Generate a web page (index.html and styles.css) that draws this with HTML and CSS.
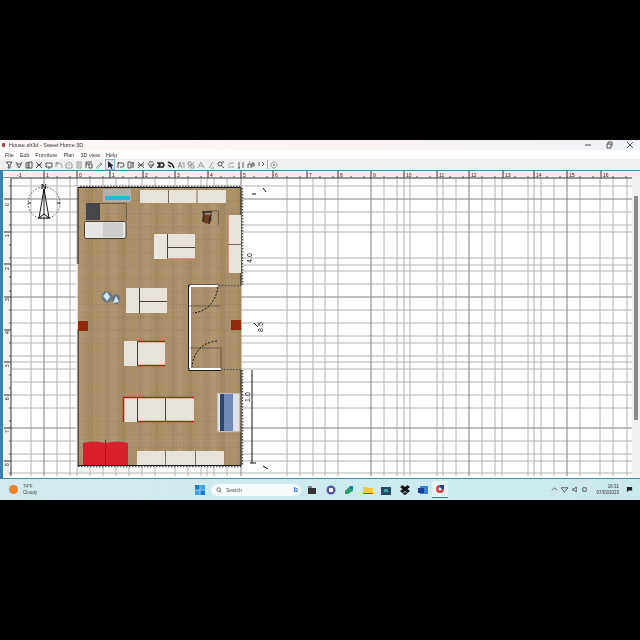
FILE: index.html
```html
<!DOCTYPE html>
<html lang="en">
<head>
<meta charset="utf-8">
<title>Sweet Home 3D</title>
<link rel="stylesheet" href="styles.css">
</head>
<body>
<main class="screen">
  <header class="titlebar">
    <span class="app-dot"></span>
    <span class="title-text">House.sh3d - Sweet Home 3D</span>
    <div class="win-controls">
      <svg class="win-btn" viewBox="0 0 8 8"><path class="ic" d="M1 4H7"/></svg>
      <svg class="win-btn" viewBox="0 0 8 8"><path class="ic" d="M2 3H6V7M2 3V7H6M3 3V1H7V5"/></svg>
      <svg class="win-btn" viewBox="0 0 8 8"><path class="ic" d="M1 1L7 7M7 1L1 7"/></svg>
    </div>
  </header>
  <nav class="menubar">
    <span>File</span><span>Edit</span><span>Furniture</span><span>Plan</span><span>3D view</span><span>Help</span>
  </nav>
  <div class="toolbar">
    <svg class="tool" viewBox="0 0 8 8"><path class="ic" d="M1 1H7L5 4V7H3L4 4Z"/></svg>
    <svg class="tool" viewBox="0 0 8 8"><path class="ic" d="M1 1L4 7L7 1M2 3H6"/></svg>
    <svg class="tool" viewBox="0 0 8 8"><path class="ic" d="M1 7V2L3 1V7M4 7V1H7V7H1"/></svg>
    <svg class="tool" viewBox="0 0 8 8"><path class="ic" d="M1 1L7 7M7 1L1 7M2 4H6"/></svg>
    <svg class="tool" viewBox="0 0 8 8"><path class="ic" d="M1 2H7V6H1ZM3 7H5"/></svg>
    <svg class="tool faint" viewBox="0 0 8 8"><path class="ic" d="M1 6V2H5L7 4V7M3 1L1 2L3 4"/></svg>
    <svg class="tool faint" viewBox="0 0 8 8"><path class="ic" d="M1 7H7V3L4 1L1 3ZM3 4H5"/></svg>
    <svg class="tool faint" viewBox="0 0 8 8"><path class="ic" d="M2 1H6V7H2ZM3 3H5M3 5H5"/></svg>
    <svg class="tool" viewBox="0 0 8 8"><path class="ic" d="M1 1H7M1 1V7M1 3H7M4 3V7H7V3"/></svg>
    <svg class="tool faint" viewBox="0 0 8 8"><path class="ic" d="M1 7L6 2L7 3L2 8M5 1L7 3"/></svg>
    <span class="tool-selected">
      <svg class="tool" viewBox="0 0 8 8"><path class="solid" d="M2 0V7L4 5.500L5.500 8L6.500 7.500L5.500 5H7.500Z"/></svg>
    </span>
    <svg class="tool" viewBox="0 0 8 8"><path class="ic" d="M1 7V2H5A2 2 0 0 1 5 6H3M2 1L1 2L2 3"/></svg>
    <svg class="tool" viewBox="0 0 8 8"><path class="ic" d="M1 1H4V7H1ZM5 2H7M6 1V7"/></svg>
    <svg class="tool" viewBox="0 0 8 8"><path class="ic" d="M1 1L7 7M1 7L7 1M1 4H3M5 4H7"/></svg>
    <svg class="tool" viewBox="0 0 8 8"><path class="ic" d="M1 2L4 7L7 2M2 1L6 1M3 4H7"/></svg>
    <svg class="tool" viewBox="0 0 8 8"><path class="ic thick" d="M1 2H6L7 4L6 6H1L3 4Z"/></svg>
    <svg class="tool" viewBox="0 0 8 8"><path class="ic thick" d="M1 1L5 3L7 7M1 4L4 6"/></svg>
    <svg class="tool faint" viewBox="0 0 8 8"><path class="ic" d="M1 7L3 1L5 7M2 5H4M5 2H7V7"/></svg>
    <svg class="tool faint" viewBox="0 0 8 8"><path class="ic" d="M1 1H4V4H1ZM4 4H7V7H4ZM7 1L1 7"/></svg>
    <svg class="tool faint" viewBox="0 0 8 8"><path class="ic" d="M1 7L4 1L7 7M2.500 5H5.500"/></svg>
    <svg class="tool faint" viewBox="0 0 8 8"><path class="ic" d="M2 7L6 1M4 7H7"/></svg>
    <svg class="tool" viewBox="0 0 8 8"><circle class="ic" cx="3" cy="3" r="2"/><path class="ic" d="M4.500 4.500L7 7M5 1H7"/></svg>
    <svg class="tool faint" viewBox="0 0 8 8"><path class="ic" d="M1 4L4 2H7M1 6L7 6"/></svg>
    <svg class="tool" viewBox="0 0 8 8"><path class="ic" d="M2 1V7M6 1V7M1 7H3"/></svg>
    <svg class="tool" viewBox="0 0 8 8"><path class="ic" d="M1 7V3H4V7M5 2H7V5H5ZM2 1H3"/></svg>
    <svg class="tool" viewBox="0 0 8 8"><path class="ic" d="M2 1V5M5 1L7 3L5 5"/></svg>
    <span class="tool-sep"></span>
    <svg class="tool" viewBox="0 0 8 8"><circle class="ic dash" cx="4" cy="4" r="3"/><path class="ic" d="M4 3V5"/></svg>
  </div>

  <section class="workspace">
    <svg class="plan" viewBox="3 171 629 307" width="629" height="307" aria-label="Floor plan">
      <defs>
        <pattern id="wood" width="33" height="26" patternUnits="userSpaceOnUse" x="78" y="188">
          <rect width="33" height="26" fill="#a88f6a"/>
          <rect x="0" width="6" height="26" fill="#ae9570"/>
          <rect x="10" width="5" height="26" fill="#a1885f"/>
          <rect x="19" width="7" height="26" fill="#ab9168"/>
          <rect x="28" width="3" height="26" fill="#a38b64"/>
          <rect y="12" width="33" height="1" fill="#96805c" opacity=".4"/>
          <rect y="25" width="33" height="1" fill="#96805c" opacity=".4"/>
        </pattern>
      </defs>

      <rect class="sheet" x="11" y="178" width="621" height="300"/>
      <path id="grid-minor" class="grid-minor" d="M31 178V476M57 178V476M70 178V476M77 178V476M90 178V476M103 178V476M116 178V476M129 178V476M142 178V476M155 178V476M175 178V476M188 178V476M201 178V476M207 178V476M214 178V476M227 178V476M287 178V476M300 178V476M313 178V476M325 178V476M338 178V476M384 178V476M397 178V476M404 178V476M410 178V476M437 178V476M443 178V476M456 178V476M482 178V476M495 178V476M502 178V476M528 178V476M534 178V476M541 178V476M554 178V476M580 178V476M600 178V476M613 178V476M627 178V476M11 186H632M11 212H632M11 225H632M11 232H632M11 258H632M11 265H632M11 271H632M11 284H632M11 310H632M11 323H632M11 336H632M11 343H632M11 356H632M11 362H632M11 369H632M11 382H632M11 395H632M11 408H632M11 441H632M11 454H632M11 461H632M11 473H632"/>
      <path id="grid-major" class="grid-major" d="M44 178V476M241 178V476M371 178V476M469 178V476M567 178V476M11 199H632M11 297H632M11 428H632"/>

      <!-- top ruler -->
      <rect class="ruler" x="3" y="171" width="629" height="7"/>
      <path class="ruler-line" d="M3 178H632M44 171V178M77 171V178M110 171V178M143 171V178M175 171V178M208 171V178M241 171V178M273 171V178M307 171V178M338 171V178M371 171V178M404 171V178M437 171V178M469 171V178M503 171V178M534 171V178M567 171V178M601 171V178"/>
      <path class="ruler-tick" d="M57 176V178M70 176V178M90 176V178M103 176V178M123 176V178M136 176V178M156 176V178M169 176V178M188 176V178M201 176V178M221 176V178M234 176V178M254 176V178M267 176V178M287 176V178M300 176V178M320 176V178M333 176V178M351 176V178M364 176V178M384 176V178M397 176V178M417 176V178M430 176V178M450 176V178M463 176V178M482 176V178M495 176V178M515 176V178M528 176V178M547 176V178M560 176V178M580 176V178M593 176V178M613 176V178M626 176V178"/>
      <g class="ruler-text">
        <text x="17" y="176.500">-1</text><text x="46" y="176.500">1</text><text x="79" y="176.500">0</text><text x="112" y="176.500">1</text><text x="145" y="176.500">2</text><text x="177" y="176.500">3</text><text x="210" y="176.500">4</text><text x="243" y="176.500">5</text><text x="275" y="176.500">6</text><text x="309" y="176.500">7</text><text x="340" y="176.500">8</text><text x="373" y="176.500">9</text><text x="406" y="176.500">10</text><text x="439" y="176.500">11</text><text x="471" y="176.500">12</text><text x="505" y="176.500">13</text><text x="536" y="176.500">14</text><text x="569" y="176.500">15</text><text x="603" y="176.500">16</text>
      </g>

      <!-- left ruler -->
      <rect class="ruler" x="3" y="178" width="8" height="300"/>
      <path class="ruler-line" d="M11 178V476M4 199H11M4 232H11M4 264H11M4 297H11M4 330H11M4 362H11M4 395H11M4 428H11M4 461H11"/>
      <path class="ruler-tick" d="M9 186H11M9 212H11M9 225H11M9 245H11M9 258H11M9 277H11M9 291H11M9 310H11M9 323H11M9 343H11M9 356H11M9 375H11M9 388H11M9 408H11M9 421H11M9 441H11M9 454H11M9 473H11"/>
      <g class="ruler-text">
        <text transform="rotate(-90 8.500 206)" x="8.500" y="206">0</text><text transform="rotate(-90 8.500 237)" x="8.500" y="237">1</text><text transform="rotate(-90 8.500 270)" x="8.500" y="270">2</text><text transform="rotate(-90 8.500 301)" x="8.500" y="301">3</text><text transform="rotate(-90 8.500 334)" x="8.500" y="334">4</text><text transform="rotate(-90 8.500 367)" x="8.500" y="367">5</text><text transform="rotate(-90 8.500 400)" x="8.500" y="400">6</text><text transform="rotate(-90 8.500 433)" x="8.500" y="433">7</text><text transform="rotate(-90 8.500 466)" x="8.500" y="466">8</text>
      </g>

      <!-- compass -->
      <circle class="compass-ring" cx="44" cy="203" r="16"/>
      <path class="compass-star" d="M44 189L39 218L44 214L49 218ZM44 189V214M38 218H50M28 203H31M57 203H60"/>
      <text class="compass-n" x="44" y="189">N</text>

      <!-- floor -->
      <rect x="78" y="188" width="163" height="277" fill="url(#wood)"/>
      <g class="floor-grid"><use href="#grid-minor"/></g>

      <!-- outer walls -->
      <path class="wall-line" d="M78 187.500H241V285M78 187V264M78 330V465.500H241V370"/>
      <path class="wall-hatch" d="M80 186.500H240"/>
      <path class="wall-hatch" d="M242.500 188V285M242.500 370V466"/>
      <path class="wall-hatch" d="M78 466.500H241"/>
      <path class="wall-white" d="M76.500 264V465"/>

      <!-- inner room -->
      <path class="wall-line thin" d="M188.500 369.500V285H219M188.500 370.500H221"/>
      <path class="wall-white two" d="M190 287V368M190 286H218M190 369H221"/>
      <path class="wall-hatch" d="M219 285.500H241M221 369.500H241"/>
      <path class="thin-line" d="M189 306H220M190 348H221V369"/>
      <path class="door-arc" d="M218 287C216 301 207 312 193 313"/>
      <path class="door-arc" d="M217 341C203 342 193 352 192 367"/>

      <!-- red columns -->
      <rect class="column" x="78" y="321" width="10" height="10"/>
      <rect class="column" x="231" y="320" width="10" height="10"/>

      <!-- aquarium -->
      <rect class="grey-box" x="103" y="189" width="28" height="13"/>
      <rect class="aqua" x="105" y="196" width="25" height="4"/>

      <!-- top cabinets -->
      <rect class="cream" x="140" y="190" width="86" height="13"/>
      <path class="thin-line" d="M168.500 190V203M197 190V203"/>

      <!-- desk and sofa -->
      <path class="thin-line" d="M99 203.500H126.500V221"/>
      <rect class="dark-box" x="86" y="203" width="14" height="17"/>
      <rect class="sofa-frame" x="84.500" y="221.500" width="41.500" height="17" rx="2"/>
      <rect class="sofa-shade" x="103" y="222.500" width="20" height="15"/>

      <!-- chair / plant -->
      <path class="thin-line" d="M208 211H218.500V225"/>
      <circle class="chair-brown" cx="207" cy="219" r="4.500"/>
      <path class="chair-dark" d="M202 212H212M204 212L203 222M211 214L209 224"/>

      <!-- right cabinet -->
      <rect class="cream" x="228" y="215" width="13" height="58"/>
      <path class="pink-line" d="M228 215V273"/>
      <path class="thin-line" d="M228 244.500H241"/>

      <!-- table A -->
      <rect class="cream" x="154" y="234" width="41" height="25"/>
      <rect class="cream-light" x="154" y="234" width="13" height="25"/>
      <path class="thin-line strong" d="M167.500 234V259M167 247.500H195"/>
      <path class="pink-line" d="M167 259H195"/>

      <!-- table B -->
      <rect class="cream" x="126" y="288" width="41" height="25"/>
      <path class="thin-line strong" d="M139.500 288V313M139 301.500H167"/>

      <!-- decorative crystals -->
      <ellipse class="crystal-dark" cx="107" cy="297" rx="5.500" ry="5.500"/>
      <ellipse class="crystal-dark" cx="116" cy="299" rx="4.500" ry="5"/>
      <path class="crystal" d="M103 296L107 292L110 297L107 301ZM113 303L116 296L119 302Z"/>

      <!-- table C -->
      <rect class="cream" x="124" y="341" width="41" height="25"/>
      <path class="thin-line strong" d="M137.500 341V366"/>
      <path class="red-line" d="M137 341.500H165M137 365.500H165"/>

      <!-- table D -->
      <rect class="cream" x="123" y="397" width="71" height="25"/>
      <path class="thin-line strong" d="M137.500 397V422M165.500 397V422"/>
      <path class="red-line" d="M123.500 397V422M123 397.500H194M137 421.500H194"/>

      <!-- blue sofa -->
      <rect class="sofa-base" x="217" y="393" width="23" height="39"/>
      <rect class="sofa-blue" x="221" y="394" width="12" height="37"/>
      <rect class="sofa-navy" x="220" y="394" width="4" height="37"/>

      <!-- red chairs -->
      <path class="red-seat" d="M83 465V443Q94 440 105 443V465ZM106 465V443Q117 440 128 443V465Z"/>
      <path class="thin-line strong" d="M105.500 440V465"/>

      <!-- bottom cabinets -->
      <rect class="cream" x="137" y="451" width="87" height="14"/>
      <path class="thin-line" d="M165.500 451V465M195.500 451V465"/>

      <!-- dimension lines -->
      <path class="dim" d="M252 194H256M263 188L266 192M252 370V463M250 463H256M263 466L268 469M254 323L258 327"/>
      <text class="dim-text" transform="rotate(-90 252 258)" x="252" y="258">4.0</text>
      <text class="dim-text" transform="rotate(-90 263 327)" x="263" y="327">8.5</text>
      <text class="dim-text" transform="rotate(-90 250 397)" x="250" y="397">1.0</text>
    </svg>
    <div class="scrollbar"><span class="scroll-thumb"></span></div>
  </section>

  <footer class="taskbar">
    <div class="weather">
      <span class="sun"></span>
      <div class="weather-text"><span>74°F</span><span>Cloudy</span></div>
    </div>
    <div class="task-center">
      <svg class="win-logo" viewBox="0 0 10 10"><path class="logo-a" d="M0 0H4.700V4.700H0Z"/><path class="logo-b" d="M5.300 0H10V4.700H5.300Z"/><path class="logo-b" d="M0 5.300H4.700V10H0Z"/><path class="logo-a" d="M5.300 5.300H10V10H5.300Z"/></svg>
      <div class="search">
        <svg class="search-ic" viewBox="0 0 8 8"><circle class="ic" cx="3.500" cy="3.500" r="2.500"/><path class="ic" d="M5.500 5.500L7.500 7.500"/></svg>
        <span class="search-text">Search</span>
        <span class="bing">b</span>
      </div>
      <svg class="task-ic" viewBox="0 0 10 10"><path class="fill-dark" d="M1 3H9V9H1Z"/><path class="fill-grey" d="M1 1H5V3H1Z"/></svg>
      <svg class="task-ic wide" viewBox="0 0 10 10"><circle class="fill-purple" cx="5" cy="5" r="4.500"/><rect class="fill-white" x="3" y="3" width="4" height="4" rx="1"/></svg>
      <svg class="task-ic wide" viewBox="0 0 10 10"><path class="fill-green" d="M1 6L6 1L9 2V6L4 9H1Z"/><path class="fill-blue" d="M6 1H9V4H6Z"/></svg>
      <svg class="task-ic" viewBox="0 0 10 10"><path class="fill-folder" d="M0 2H4L5 3H10V9H0Z"/><path class="fill-blue" d="M0 8H10V9H0Z"/></svg>
      <svg class="task-ic" viewBox="0 0 10 10"><path class="fill-store" d="M0 2H10V10H0Z"/><path class="fill-teal" d="M3 4H7V7H3Z"/></svg>
      <svg class="task-ic" viewBox="0 0 10 10"><path class="fill-black" d="M0 2L2.500 0L5 2L7.500 0L10 2L7.500 4L10 6L7.500 8L5 6L2.500 8L0 6L2.500 4ZM2.500 8.500L5 7L7.500 8.500L5 10Z"/></svg>
      <svg class="task-ic" viewBox="0 0 10 10"><path class="fill-word" d="M2 1H10V9H2Z"/><path class="fill-navy" d="M0 3H6V8H0Z"/></svg>
      <div class="task-active">
        <svg class="task-ic" viewBox="0 0 10 10"><circle class="fill-sh" cx="5" cy="5" r="4"/><path class="fill-navy" d="M5 1H9V5H5Z"/><circle class="fill-white" cx="5" cy="5" r="1.500"/></svg>
      </div>
    </div>
    <div class="tray">
      <svg class="tray-ic" viewBox="0 0 8 8"><path class="ic" d="M1 5L4 2L7 5"/></svg>
      <svg class="tray-ic" viewBox="0 0 8 8"><path class="ic" d="M0 2L4 7L8 2Z"/></svg>
      <svg class="tray-ic" viewBox="0 0 8 8"><path class="ic" d="M2 3H4L6 1V7L4 5H2Z"/></svg>
      <svg class="tray-ic" viewBox="0 0 8 8"><path class="ic" d="M2 2H6V6H2Z"/></svg>
      <div class="clock"><span>16:31</span><span>07/03/2023</span></div>
      <svg class="tray-ic" viewBox="0 0 8 8"><path class="solid" d="M1 1H7V5H3L1 7Z"/></svg>
    </div>
  </footer>
</main>
</body>
</html>
```

FILE: styles.css
```css
* { box-sizing: border-box; }

html, body {
  margin: 0;
  height: 640px;
  background: #000;
  overflow: hidden;
}

body {
  padding-top: 140px;
  font-family: "Liberation Sans", Arial, sans-serif;
}

.screen {
  width: 640px;
  height: 360px;
  display: flex;
  flex-direction: column;
  background: #fff;
  filter: blur(0.4px);
}

/* title bar */
.titlebar {
  height: 10px;
  flex: none;
  display: flex;
  align-items: center;
  padding-left: 2px;
  background: linear-gradient(90deg, #fdf8f7, #fbf3f2 55%, #eff3f7);
  color: #333;
  font-size: 5.5px;
}

.app-dot {
  width: 3px;
  height: 4px;
  background: #a04050;
  border-radius: 1px;
  margin-right: 4px;
}

.win-controls {
  margin-left: auto;
  display: flex;
  gap: 13px;
  padding-right: 6px;
}

.win-btn { width: 8px; height: 8px; }

/* menu */
.menubar {
  height: 9px;
  flex: none;
  display: flex;
  align-items: center;
  gap: 6px;
  padding-left: 5px;
  background: #fff;
  color: #333;
  font-size: 5.5px;
}

/* toolbar */
.toolbar {
  height: 11px;
  flex: none;
  display: flex;
  align-items: center;
  gap: 2px;
  padding-left: 5px;
  background: #eef0f2;
}

.tool { width: 8px; height: 8px; flex: none; }
.tool.faint { opacity: .55; }

.tool-selected {
  width: 10px;
  height: 11px;
  flex: none;
  display: flex;
  align-items: center;
  justify-content: center;
  background: #dbe8f4;
  border: 1px solid #8fb3d3;
}

.tool-sep {
  width: 1px;
  height: 9px;
  flex: none;
  background: #aaa;
}

.ic {
  fill: none;
  stroke: #444;
  stroke-width: 0.9;
}
.ic.thick { stroke: #222; stroke-width: 1.5; }
.ic.dash { stroke-dasharray: 1 1; }
.solid { fill: #222; }

/* workspace */
.workspace {
  height: 309px;
  flex: none;
  display: flex;
  background: #fff;
  border-top: 1px solid #3f8dbb;
  border-bottom: 1px solid #3f8dbb;
  border-left: 3px solid #3f7fad;
  position: relative;
}

.plan {
  display: block;
  width: 629px;
  height: 307px;
  flex: none;
}

.scrollbar {
  width: 8px;
  flex: none;
  background: #f0f0f0;
  padding: 25px 2px 58px 2px;
  display: flex;
}

.scroll-thumb {
  flex: 1;
  background: #8a8a8a;
}

.sheet { fill: #fff; }
.grid-minor { fill: none; stroke: #b8b8b8; stroke-width: 1; }
.grid-major { fill: none; stroke: #808080; stroke-width: 1; }
.floor-grid { opacity: .14; }

.ruler { fill: #f2f2f0; }
.ruler-line { fill: none; stroke: #333; stroke-width: 1; }
.ruler-tick { fill: none; stroke: #555; stroke-width: 1; }
.ruler-text { font-size: 5px; fill: #222; }

.compass-ring { fill: none; stroke: #222; stroke-width: .8; stroke-dasharray: 1.500 1.500; }
.compass-star { fill: #fff; stroke: #111; stroke-width: 1; }
.compass-n { font-size: 8px; font-weight: bold; text-anchor: middle; fill: #222; }

.wall-line { fill: none; stroke: #111; stroke-width: 1; }
.wall-line.thin { stroke: #222; }
.wall-hatch { fill: none; stroke: #555; stroke-width: 1.500; stroke-dasharray: 1.500 1.500; }
.wall-white { fill: none; stroke: #f4f4f4; stroke-width: 1.500; }
.wall-white.two { stroke: #fff; stroke-width: 2; }
.thin-line { fill: none; stroke: #5e5240; stroke-width: .8; }
.thin-line.strong { stroke: #4a4236; stroke-width: 1; }
.door-arc { fill: none; stroke: #111; stroke-width: 1; stroke-dasharray: 2 1.500; }
.pink-line { fill: none; stroke: #cd7c6b; stroke-width: 1.500; }
.red-line { fill: none; stroke: #d0140e; stroke-width: 1.500; }

.column { fill: #8e2a0c; }
.grey-box { fill: #b2b0ac; }
.aqua { fill: #2bb7dc; }
.cream { fill: #e7e3da; }
.cream-light { fill: #ebe6dd; }
.dark-box { fill: #45454a; }
.sofa-frame { fill: #e6e6e6; stroke: #4a4234; stroke-width: 1; }
.sofa-shade { fill: #cdcdcd; }
.chair-brown { fill: #6b3c1e; }
.chair-dark { fill: none; stroke: #2a2a2a; stroke-width: 1.500; }
.crystal-dark { fill: #6d7780; }
.crystal { fill: #cfe6f7; }
.sofa-base { fill: #dfe1e6; stroke: #a39a84; stroke-width: 1; }
.sofa-blue { fill: #7289b8; }
.sofa-navy { fill: #2f4468; }
.red-seat { fill: #d8202a; }

.dim { fill: none; stroke: #111; stroke-width: 1; }
.dim-text { font-size: 7px; fill: #111; text-anchor: middle; }

/* taskbar */
.taskbar {
  flex: 1;
  display: flex;
  align-items: center;
  background: linear-gradient(90deg, #d2eaee, #cdeaef 50%, #cbe8ec);
  position: relative;
}

.weather {
  display: flex;
  align-items: center;
  gap: 5px;
  padding-left: 9px;
  width: 195px;
  flex: none;
}

.sun {
  width: 9px;
  height: 9px;
  border-radius: 50%;
  background: #e9812c;
}

.weather-text {
  display: flex;
  flex-direction: column;
  font-size: 4.500px;
  line-height: 6px;
  color: #444;
}

.task-center {
  display: flex;
  align-items: center;
  flex: none;
  gap: 8.5px;
}

.win-logo { width: 10px; height: 10px; margin-right: -2.500px; }
.logo-a { fill: #1d7bd1; }
.logo-b { fill: #3aa3e3; }

.search {
  width: 90px;
  height: 12px;
  border-radius: 6px;
  background: #f6fafb;
  display: flex;
  align-items: center;
  padding: 0 3px 0 5px;
  gap: 4px;
  font-size: 5px;
  color: #555;
  margin-right: -2.500px;
}

.search-ic { width: 6px; height: 6px; }
.bing {
  margin-left: auto;
  font-size: 7px;
  font-weight: bold;
  color: #2d6cc4;
}

.task-ic { width: 10px; height: 10px; flex: none; }
.task-ic.wide { margin-left: 0; }

.task-active {
  width: 16px;
  height: 17px;
  display: flex;
  align-items: center;
  justify-content: center;
  margin-left: -5px;
  background: #e2f2f5;
  border-bottom: 1px solid #3b7f84;
}

.fill-dark { fill: #333; }
.fill-grey { fill: #888; }
.fill-purple { fill: #5a55a5; }
.fill-white { fill: #fff; }
.fill-green { fill: #2f9c6a; }
.fill-blue { fill: #1f78c8; }
.fill-folder { fill: #f2c93c; }
.fill-store { fill: #234a66; }
.fill-teal { fill: #3aa5a0; }
.fill-black { fill: #111; }
.fill-word { fill: #3b82d6; }
.fill-navy { fill: #1c3f8f; }
.fill-sh { fill: #d24545; }

.tray {
  margin-left: auto;
  display: flex;
  align-items: center;
  gap: 3px;
  padding-right: 7px;
}

.tray-ic { width: 7px; height: 7px; flex: none; }

.clock {
  display: flex;
  flex-direction: column;
  align-items: flex-end;
  font-size: 4.500px;
  line-height: 6px;
  color: #333;
  margin-left: 5px;
  margin-right: 4px;
}
```
